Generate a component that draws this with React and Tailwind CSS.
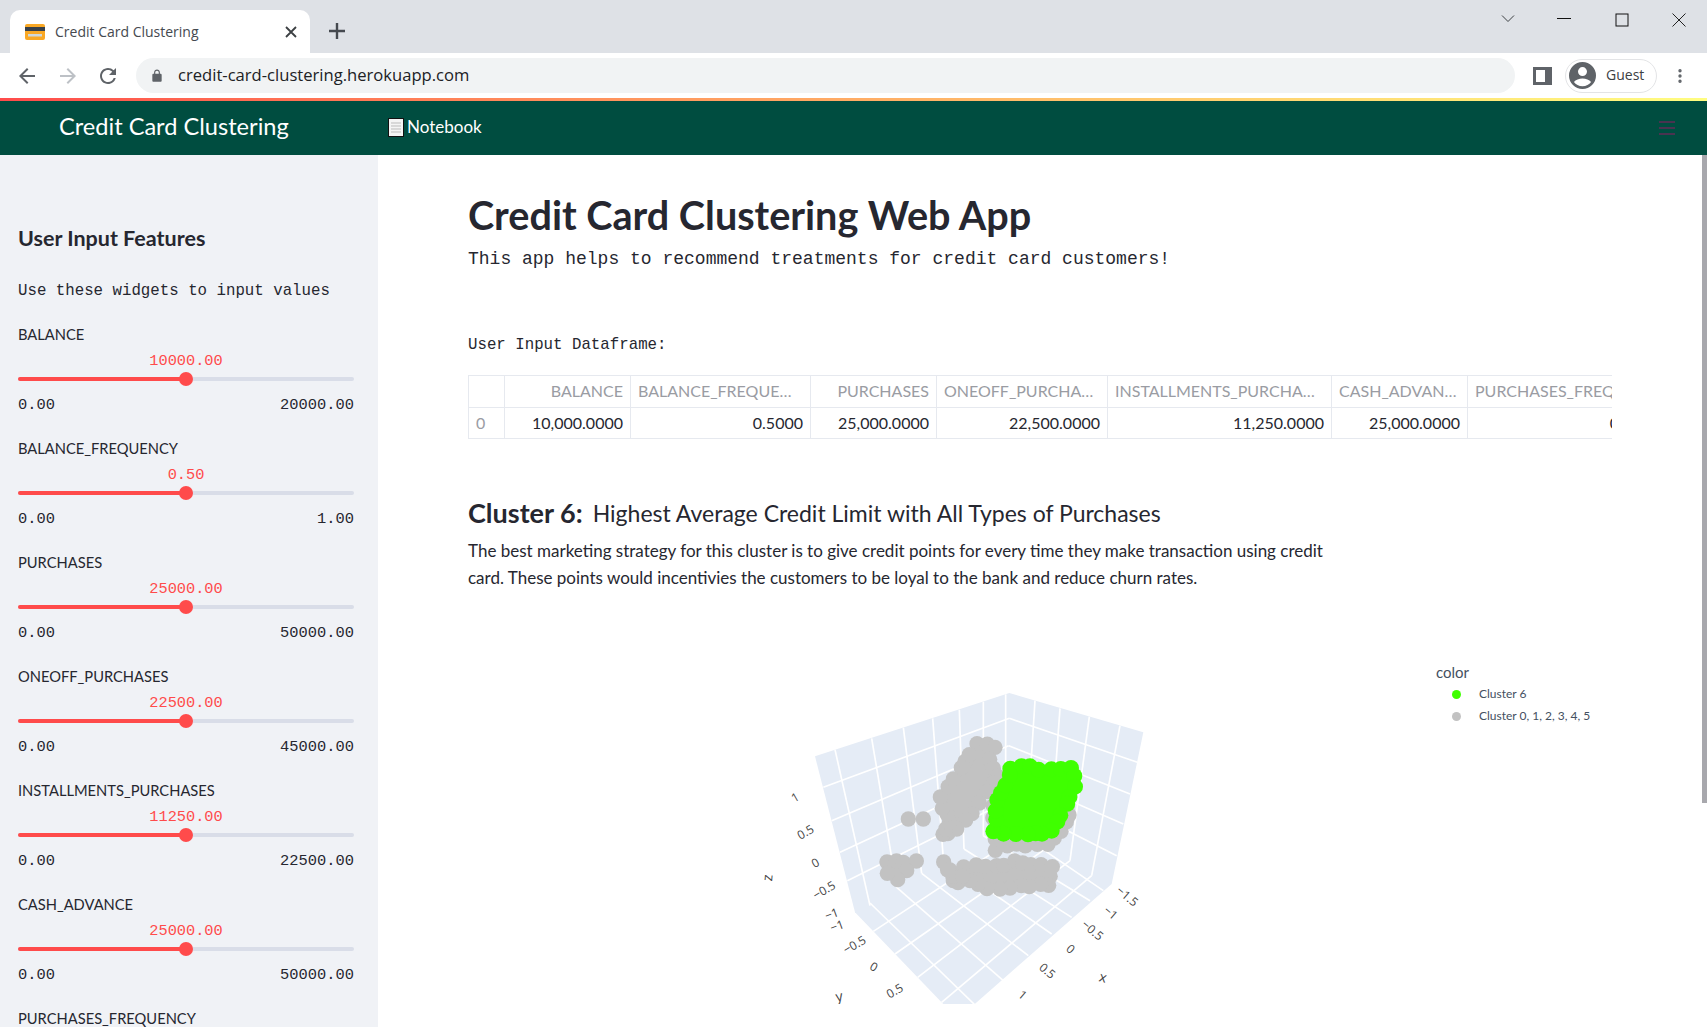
import { MoreVertical } from 'lucide-react';

const sans = { fontFamily: 'Lato, "Noto Sans", sans-serif' };

const sliders = [
    { label: 'BALANCE', value: '10000.00', max: '20000.00' },
    { label: 'BALANCE_FREQUENCY', value: '0.50', max: '1.00' },
    { label: 'PURCHASES', value: '25000.00', max: '50000.00' },
    { label: 'ONEOFF_PURCHASES', value: '22500.00', max: '45000.00' },
    { label: 'INSTALLMENTS_PURCHASES', value: '11250.00', max: '22500.00' },
    { label: 'CASH_ADVANCE', value: '25000.00', max: '50000.00' },
    { label: 'PURCHASES_FREQUENCY' },
];

const columns = [
    { title: '', value: '0', width: 36 },
    { title: 'BALANCE', value: '10,000.0000', width: 126, right: true },
    { title: 'BALANCE_FREQUE…', value: '0.5000', width: 180 },
    { title: 'PURCHASES', value: '25,000.0000', width: 126, right: true },
    { title: 'ONEOFF_PURCHA…', value: '22,500.0000', width: 171 },
    { title: 'INSTALLMENTS_PURCHA…', value: '11,250.0000', width: 224 },
    { title: 'CASH_ADVAN…', value: '25,000.0000', width: 136 },
    { title: 'PURCHASES_FREQUENCY', value: '0.5000', width: 200 },
];

// plot geometry, in crop pixels (svg is drawn at 1/3 of this)
const wallLines = [
    [285, 212, 390, 680], [395, 178, 470, 625], [490, 146, 545, 583], [578, 118, 610, 540], [658, 92, 672, 510], [730, 68, 730, 470], [797, 46, 797, 425],
    [250, 325, 808, 118], [275, 425, 806, 200], [300, 520, 806, 285], [322, 605, 805, 365],
    [885, 65, 860, 455], [960, 88, 930, 500], [1048, 113, 990, 545], [1140, 140, 1055, 590],
    [808, 118, 1192, 250], [806, 200, 1170, 345], [806, 285, 1150, 435], [805, 365, 1130, 530],
];
const floorLines = [
    [390, 672, 705, 978], [470, 625, 790, 905], [545, 583, 865, 830], [610, 540, 935, 765], [672, 510, 995, 715], [730, 470, 1050, 665], [790, 430, 1090, 635],
    [860, 455, 400, 757], [930, 500, 465, 825], [990, 545, 533, 895], [1055, 590, 605, 970],
];
const ticks = [
    ['1', 167, 358, -30], ['0.5', 198, 462, -30], ['0', 228, 554, -30], ['−0.5', 254, 636, -30], ['−1', 276, 708, -20], ['−1', 292, 744, -20],
    ['−0.5', 345, 800, -30], ['0', 400, 866, 30], ['0.5', 466, 938, -30],
    ['−1.5', 1160, 654, 40], ['−1', 1110, 704, 40], ['−0.5', 1056, 756, 40], ['0', 990, 812, 40], ['0.5', 920, 878, 40], ['1', 846, 950, 40],
];

const grayBlobs = [
    [[715, 190], [765, 205], [745, 245], [775, 290], [740, 340], [700, 400], [650, 450], [605, 470], [630, 430], [605, 390], [605, 350], [640, 300], [660, 270], [690, 225]],
    [[770, 510], [830, 495], [920, 500], [965, 455], [985, 410], [985, 380], [760, 380]],
    [[445, 545], [490, 550], [525, 550], [475, 600], [440, 585]],
    [[615, 545], [640, 605], [650, 615]],
    [[675, 560], [770, 560], [820, 550], [905, 555], [935, 565], [930, 615], [780, 630], [710, 620], [670, 590]],
];
const greenBlob = [[815, 265], [870, 262], [930, 275], [995, 265], [1003, 325], [965, 405], [935, 455], [860, 470], [762, 455], [770, 365], [800, 315]];
const grayDots = [[505, 420], [550, 420]];

// dots along a blob's outline, so its edge is bumpy like a scatter
const outlineDots = (pts) => {
    const dots = [];
    pts.forEach((p, i) => {
        const q = pts[(i + 1) % pts.length];
        const n = Math.max(1, Math.round(Math.hypot(q[0] - p[0], q[1] - p[1]) / 30));
        for (let k = 0; k < n; k++) {
            const wob = ((i * 7 + k * 13) % 5) * 2 - 4;
            dots.push([p[0] + ((q[0] - p[0]) * k) / n + wob, p[1] + ((q[1] - p[1]) * k) / n - wob]);
        }
    });
    return dots;
};
const toPoints = (pts) => pts.map((p) => p.join(',')).join(' ');

const Slider = ({ label, value, max }) => (
    <div className="h-[114px] shrink-0 text-[#262730]">
        <div className="h-6 text-[14.7px] leading-6" style={sans}>{label}</div>
        {value && (
            <>
                <div className="mt-[6px] h-[18px] text-center font-['Liberation_Mono',monospace] text-[15.3px] leading-[18px] text-[#ff4b4b]">{value}</div>
                <div className="relative mt-[7px] h-1 rounded-sm bg-[#d9dde8]">
                    <div className="h-1 w-1/2 rounded-l-sm bg-[#ff4b4b]" />
                    <div className="absolute left-1/2 top-[-5px] h-[14px] w-[14px] -translate-x-1/2 rounded-full bg-[#ff4b4b]" />
                </div>
                <div className="mt-[15px] flex justify-between font-['Liberation_Mono',monospace] text-[15.4px] leading-[18px]">
                    <span>0.00</span>
                    <span>{max}</span>
                </div>
            </>
        )}
    </div>
);

const Plot = () => (
    <svg width="440" height="325" viewBox="0 0 1320 975" className="block shrink-0">
        <polygon fill="#e5ecf6" points="225,232 808,42 1210,160 1115,615 653,1020 345,700" />
        <g stroke="#fff" strokeWidth="5">
            {wallLines.concat(floorLines).map((l, i) => (
                <line key={i} x1={l[0]} y1={l[1]} x2={l[2]} y2={l[3]} />
            ))}
        </g>
        <g fill="#c2c2c2">
            {grayBlobs.map((b, i) => <polygon key={i} points={toPoints(b)} />)}
            {grayBlobs.flatMap(outlineDots).concat(grayDots).map((d, i) => <circle key={i} cx={d[0]} cy={d[1]} r="23" />)}
        </g>
        <g fill="#3fff00">
            <polygon points={toPoints(greenBlob)} />
            {outlineDots(greenBlob).map((d, i) => <circle key={i} cx={d[0]} cy={d[1]} r="24" />)}
        </g>
        <g fill="#444" fontSize="36" fontFamily="Open Sans, sans-serif" textAnchor="middle" dominantBaseline="middle">
            {ticks.map((t, i) => (
                <text key={i} x={t[1]} y={t[2]} transform={`rotate(${t[3]} ${t[1]} ${t[2]})`}>{t[0]}</text>
            ))}
            <text x="86" y="597" fontSize="42" transform="rotate(-85 86 597)">z</text>
            <text x="298" y="955" fontSize="42" transform="rotate(-10 298 955)">y</text>
            <text x="1088" y="898" fontSize="42" transform="rotate(15 1088 898)">x</text>
        </g>
    </svg>
);

const BrowserChrome = () => (
    <div className="shrink-0 font-['Open_Sans',sans-serif]">
        <div className="flex h-[53px] items-end bg-[#dee1e6] pl-[10px]">
            <div className="flex h-[43px] w-[300px] items-center rounded-t-[10px] bg-white pl-[15px] pr-[13px]">
                <svg width="20" height="16" viewBox="0 0 20 16" className="shrink-0">
                    <rect width="20" height="16" rx="2" fill="#f9a825" />
                    <rect y="3" width="20" height="4" fill="#37404a" />
                    <rect x="3" y="10" width="14" height="2.5" fill="#cfd8dc" />
                </svg>
                <span className="ml-[10px] flex-1 text-[14px] text-[#45494f]">Credit Card Clustering</span>
                <svg width="12" height="12" viewBox="0 0 12 12" stroke="#3c4043" strokeWidth="1.8"><path d="M1 1l10 10M11 1L1 11" /></svg>
            </div>
            <svg width="16" height="16" viewBox="0 0 16 16" stroke="#45494f" strokeWidth="2.4" className="mb-[14px] ml-[19px]"><path d="M8 0v16M0 8h16" /></svg>
            <div className="flex-1" />
            <div className="flex h-[53px] items-start pt-[13px]">
                <svg width="14" height="10" viewBox="0 0 14 10" fill="none" stroke="#3c4043" className="mr-[42px] mt-[1px]"><path d="M1 1.500l6 6 6-6" /></svg>
                <svg width="14" height="10" viewBox="0 0 14 10" stroke="#111" className="mr-[44px]"><path d="M0 5.500h14" /></svg>
                <svg width="14" height="14" viewBox="0 0 14 14" fill="none" stroke="#111" className="mr-[43px]"><rect x="1" y="1" width="12" height="12" /></svg>
                <svg width="14" height="14" viewBox="0 0 14 14" stroke="#222" className="mr-[21px]"><path d="M0.500 0.500l13 13M13.500 0.500l-13 13" /></svg>
            </div>
        </div>
        <div className="flex h-[45px] items-center bg-white pl-[15px]">
            <svg width="24" height="24" viewBox="0 0 24 24" fill="#5f6368"><path d="M20 11H7.830l5.590-5.590L12 4l-8 8 8 8 1.410-1.410L7.830 13H20v-2z" /></svg>
            <svg width="24" height="24" viewBox="0 0 24 24" fill="#bdc1c6" className="ml-[17px]"><path d="M12 4l-1.410 1.410L16.170 11H4v2h12.170l-5.580 5.590L12 20l8-8z" /></svg>
            <svg width="24" height="24" viewBox="0 0 24 24" fill="#5f6368" className="ml-4"><path d="M17.650 6.350A7.958 7.958 0 0 0 12 4c-4.420 0-7.990 3.580-7.990 8s3.570 8 7.990 8c3.730 0 6.840-2.550 7.730-6h-2.080A5.990 5.990 0 0 1 12 18c-3.310 0-6-2.690-6-6s2.690-6 6-6c1.660 0 3.140.690 4.220 1.780L13 11h7V4l-2.350 2.350z" /></svg>
            <div className="ml-4 flex h-[35px] w-[1379px] items-center rounded-full bg-[#f1f3f4] pl-[14px]">
                <svg width="14" height="14" viewBox="0 0 24 24" fill="#5f6368"><path d="M18 8h-1V6c0-2.760-2.240-5-5-5S7 3.240 7 6v2H6c-1.100 0-2 .9-2 2v10c0 1.100.9 2 2 2h12c1.100 0 2-.9 2-2V10c0-1.100-.9-2-2-2zM9 6c0-1.660 1.340-3 3-3s3 1.340 3 3v2H9V6z" /></svg>
                <span className="ml-[14px] text-[16.6px] text-[#202124]">credit-card-clustering.herokuapp.com</span>
            </div>
            <svg width="19" height="18" viewBox="0 0 19 18" className="ml-[18px]">
                <rect width="19" height="18" fill="#5f6368" />
                <rect x="3" y="3" width="9" height="12" fill="#fff" />
            </svg>
            <div className="ml-[13px] flex h-[34px] w-[92px] items-center rounded-full border border-[#e3e4e6] pl-[3px]">
                <svg width="27" height="27" viewBox="0 0 24 24" fill="#5f6368"><path d="M12 0a12 12 0 1 0 0 24 12 12 0 0 0 0-24zm0 4.500a4 4 0 1 1 0 8 4 4 0 0 1 0-8zm0 17c-3.200 0-6-1.500-7.600-3.800 1.400-1.900 4.600-3 7.600-3s6.200 1.100 7.600 3c-1.600 2.300-4.400 3.800-7.600 3.800z" /></svg>
                <span className="ml-[10px] mt-[-2px] text-[14px] text-[#3c4043]">Guest</span>
            </div>
            <MoreVertical size={18} strokeWidth={2.5} className="ml-[14px] text-[#5f6368]" />
        </div>
        <div className="h-[3px] bg-gradient-to-r from-[#ff4b4b] to-[#fffd80]" />
    </div>
);

const Navbar = () => (
    <div className="flex h-[54px] shrink-0 items-center bg-[#004d40] pl-[59px] text-white" style={sans}>
        <span className="mt-[-2px] w-[329px] text-[23.6px]">Credit Card Clustering</span>
        <svg width="16" height="19" viewBox="0 0 16 19" className="mt-[-2px] shrink-0">
            <rect x="0.5" y="0.5" width="15" height="18" fill="#f4f4f4" stroke="#111" />
            <path d="M3 5h10M3 8h10M3 11h10M3 14h10" stroke="#bbb" />
        </svg>
        <span className="ml-[3px] mt-[-2px] text-[17px]">Notebook</span>
        <div className="flex-1" />
        <div className="mr-[32px] flex w-4 flex-col gap-[4px]">
            <div className="h-[2px] bg-[#4a3350]" />
            <div className="h-[2px] bg-[#4a3350]" />
            <div className="h-[2px] bg-[#4a3350]" />
        </div>
    </div>
);

const App = () => (
    <div className="flex h-screen flex-col overflow-hidden bg-white text-[#262730]">
        <BrowserChrome />
        <Navbar />
        <div className="flex min-h-0 flex-1">
            <aside className="flex w-[378px] shrink-0 flex-col overflow-hidden bg-[#f0f2f6] pl-[18px] pr-[24px] pt-[67px]">
                <h2 className="h-8 text-[21.5px] font-bold leading-8" style={sans}>User Input Features</h2>
                <p className="mt-[24px] h-[26px] font-['Liberation_Mono',monospace] text-[15.75px] leading-[26px] whitespace-nowrap">Use these widgets to input values</p>
                <div className="mt-[18px] flex flex-col">
                    {sliders.map((s) => <Slider key={s.label} {...s} />)}
                </div>
            </aside>
            <main className="relative min-w-0 flex-1 overflow-hidden pl-[90px]">
                <h1 className="mt-[33px] h-[54px] text-[39.6px] font-bold leading-[54px]" style={sans}>Credit Card Clustering Web App</h1>
                <p className="mt-[3px] h-[28px] font-['Liberation_Mono',monospace] text-[18px] leading-[28px] whitespace-nowrap">This app helps to recommend treatments for credit card customers!</p>
                <p className="mt-[59px] h-[26px] font-['Liberation_Mono',monospace] text-[15.75px] leading-[26px]">User Input Dataframe:</p>
                <div className="mt-[17px] w-[1144px] overflow-hidden" style={sans}>
                    <table className="table-fixed border-collapse text-[16px]" style={{ width: 1199 }}>
                        <colgroup>
                            {columns.map((c, i) => <col key={i} style={{ width: c.width }} />)}
                        </colgroup>
                        <thead>
                            <tr className="h-[32px]">
                                {columns.map((c, i) => (
                                    <th key={i} className={`overflow-hidden border border-[#e6e9ef] px-[7px] pb-[2px] font-normal whitespace-nowrap text-[#9a9ca3] ${c.right ? 'text-right' : 'text-left'}`}>{c.title}</th>
                                ))}
                            </tr>
                        </thead>
                        <tbody>
                            <tr className="h-[31px]">
                                {columns.map((c, i) => (
                                    <td key={i} className={`border border-[#e6e9ef] px-[7px] pb-[1px] ${i === 0 ? 'text-left text-[#9a9ca3]' : 'text-right'}`}>{c.value}</td>
                                ))}
                            </tr>
                        </tbody>
                    </table>
                </div>
                <div className="mt-[55px] flex h-[38px] items-center whitespace-nowrap" style={sans}>
                    <span className="text-[27px] font-bold">Cluster 6:</span>
                    <span className="ml-[10px] text-[23px]">Highest Average Credit Limit with All Types of Purchases</span>
                </div>
                <p className="mt-[5px] w-[880px] text-[17px] leading-[27px]" style={sans}>
                    The best marketing strategy for this cluster is to give credit points for every time they make transaction using credit<br />
                    card. These points would incentivies the customers to be loyal to the bank and reduce churn rates.
                </p>
                <div className="mt-[68px] flex items-start pl-[272px]">
                    <div className="mt-[20px]"><Plot /></div>
                    <div className="ml-[256px] mt-[1px] text-[#44505f]" style={sans}>
                        <div className="h-6 text-[15px] leading-6">color</div>
                        <div className="mt-[-1px] flex h-[22px] items-center pl-4 text-[12px]">
                            <span className="h-[9px] w-[9px] rounded-full bg-[#3fff00]" />
                            <span className="ml-[18px]">Cluster 6</span>
                        </div>
                        <div className="flex h-[22px] items-center pl-4 text-[12px]">
                            <span className="h-[9px] w-[9px] rounded-full bg-[#c2c2c2]" />
                            <span className="ml-[18px] whitespace-nowrap">Cluster 0, 1, 2, 3, 4, 5</span>
                        </div>
                    </div>
                </div>
                {/* page scrollbar thumb */}
                <div className="absolute right-0 top-0 h-[648px] w-[5px] bg-[#a8a8ad]" />
            </main>
        </div>
    </div>
);

export default App;
